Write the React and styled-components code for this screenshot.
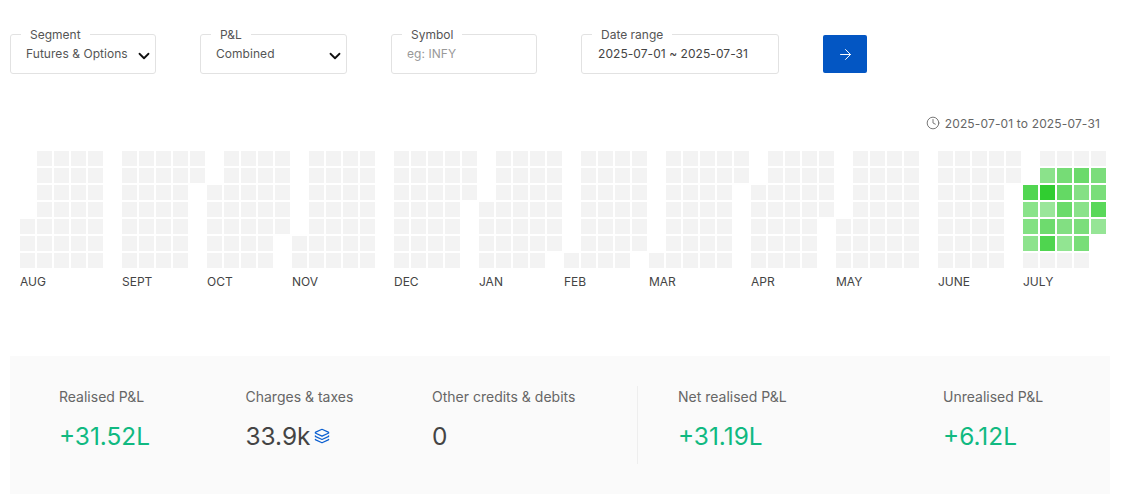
import styled, { createGlobalStyle } from "styled-components";
import { ArrowRight, ChevronDown, Clock, Layers } from "lucide-react";

const GlobalStyle = createGlobalStyle`
  body {
    margin: 0;
    background: #fff;
    font-family: Inter, "Liberation Sans", sans-serif;
    color: #444;
  }
`;

// each column is [first row, last row], null for a blank week
const MONTHS = [
  { label: "AUG", cols: [[4, 6], [0, 6], [0, 6], [0, 6], [0, 6], null] },
  { label: "SEPT", cols: [[0, 6], [0, 6], [0, 6], [0, 6], [0, 1]] },
  { label: "OCT", cols: [[2, 6], [0, 6], [0, 6], [0, 6], [0, 4]] },
  { label: "NOV", cols: [[5, 6], [0, 6], [0, 6], [0, 6], [0, 6], null] },
  { label: "DEC", cols: [[0, 6], [0, 6], [0, 6], [0, 6], [0, 2]] },
  { label: "JAN", cols: [[3, 6], [0, 6], [0, 6], [0, 6], [0, 5]] },
  { label: "FEB", cols: [[6, 6], [0, 6], [0, 6], [0, 6], [0, 5]] },
  { label: "MAR", cols: [[6, 6], [0, 6], [0, 6], [0, 6], [0, 6], [0, 1]] },
  { label: "APR", cols: [[2, 6], [0, 6], [0, 6], [0, 6], [0, 3]] },
  { label: "MAY", cols: [[4, 6], [0, 6], [0, 6], [0, 6], [0, 6], null] },
  { label: "JUNE", cols: [[0, 6], [0, 6], [0, 6], [0, 6], [0, 1]] },
  { label: "JULY", cols: [[2, 6], [0, 6], [0, 6], [0, 6], [0, 4]] },
];

// July's traded days, keyed by "col-row"
const JULY_COLOURS = {
  "1-1": "#8be28b", "2-1": "#76dc76", "3-1": "#6bda6b", "4-1": "#7bdd7b",
  "0-2": "#52d652", "1-2": "#30cd30", "2-2": "#64d964", "3-2": "#85e085", "4-2": "#7ade7a",
  "0-3": "#8ae38a", "1-3": "#9ae69a", "2-3": "#6adb6a", "3-3": "#8ae28a", "4-3": "#59d859",
  "0-4": "#83e183", "1-4": "#6edb6e", "2-4": "#82df82", "3-4": "#7bde7b", "4-4": "#96e596",
  "0-5": "#8de38d", "1-5": "#4fd54f", "2-5": "#92e592", "3-5": "#78de78",
};

const STATS_LEFT = [
  { label: "Realised P&L", value: "+31.52L", positive: true },
  { label: "Charges & taxes", value: "33.9k", breakdown: true },
  { label: "Other credits & debits", value: "0" },
];

const STATS_RIGHT = [
  { label: "Net realised P&L", value: "+31.19L", positive: true },
  { label: "Unrealised P&L", value: "+6.12L", positive: true },
];

function Stat({ label, value, positive, breakdown }) {
  return (
    <StatItem>
      <StatLabel>{label}</StatLabel>
      <StatValue $positive={positive}>
        {value}
        {breakdown && <Layers size={16} color="#0b5fd0" strokeWidth={1.9} />}
      </StatValue>
    </StatItem>
  );
}

function Month({ label, cols }) {
  return (
    <MonthBlock>
      <MonthGrid>
        {cols.map((col, c) => (
          <Week key={c}>
            {col &&
              Array.from({ length: 7 }, (_, r) => (
                <Day
                  key={r}
                  $empty={r < col[0] || r > col[1]}
                  $colour={label === "JULY" ? JULY_COLOURS[`${c}-${r}`] : undefined}
                />
              ))}
          </Week>
        ))}
      </MonthGrid>
      <MonthLabel>{label}</MonthLabel>
    </MonthBlock>
  );
}

export default function App() {
  return (
    <Page>
      <GlobalStyle />
      <Filters>
        <Field $width={146}>
          <Legend>Segment</Legend>
          <Select defaultValue="fo">
            <option value="fo">Futures &amp; Options</option>
          </Select>
          <Chevron size={18} strokeWidth={2.4} />
        </Field>
        <Field $width={147}>
          <Legend>P&amp;L</Legend>
          <Select defaultValue="combined">
            <option value="combined">Combined</option>
          </Select>
          <Chevron size={18} strokeWidth={2.4} />
        </Field>
        <Field $width={146}>
          <Legend>Symbol</Legend>
          <TextInput placeholder="eg: INFY" />
        </Field>
        <Field $width={198}>
          <Legend>Date range</Legend>
          <TextInput $inset={16} readOnly value="2025-07-01 ~ 2025-07-31" />
        </Field>
        <SubmitButton type="button" aria-label="Submit">
          <ArrowRight size={17} strokeWidth={1.4} />
        </SubmitButton>
      </Filters>

      <RangeNote>
        <Clock size={14} strokeWidth={1.5} />
        2025-07-01 to 2025-07-31
      </RangeNote>

      <Heatmap>
        {MONTHS.map((m) => (
          <Month key={m.label} label={m.label} cols={m.cols} />
        ))}
      </Heatmap>

      <StatsPanel>
        <StatsGroup>
          {STATS_LEFT.map((s) => (
            <Stat key={s.label} {...s} />
          ))}
        </StatsGroup>
        <StatsDivider />
        <StatsGroupRight>
          {STATS_RIGHT.map((s) => (
            <Stat key={s.label} {...s} />
          ))}
        </StatsGroupRight>
      </StatsPanel>
    </Page>
  );
}

const Page = styled.div`
  width: 1121px;
  height: 503px;
  overflow: hidden;
  box-sizing: border-box;
  padding: 27px 11px 0 10px;
`;

const Filters = styled.div`
  display: flex;
  align-items: flex-start;
  gap: 44px;
`;

const Field = styled.fieldset`
  position: relative;
  box-sizing: border-box;
  width: ${(p) => p.$width}px;
  height: 47px;
  margin: 0;
  padding: 0;
  min-width: 0;
  border: 1px solid #e2e2e2;
  border-radius: 3px;
`;

const Legend = styled.legend`
  margin-left: 10px;
  padding: 0 9px;
  font-size: 12px;
  line-height: 15px;
  color: #555;
`;

const Select = styled.select`
  display: block;
  width: 100%;
  height: 22px;
  margin: 0;
  padding: 0 20px 0 15px;
  appearance: none;
  border: 0;
  outline: 0;
  background: transparent;
  font: 12px Inter, "Liberation Sans", sans-serif;
  letter-spacing: 0.05px;
  color: #555;
`;

const Chevron = styled(ChevronDown)`
  position: absolute;
  right: 2px;
  top: 5px;
  color: #111;
  pointer-events: none;
`;

const TextInput = styled.input`
  display: block;
  box-sizing: border-box;
  width: 100%;
  height: 22px;
  margin: 0;
  padding: 0 ${(p) => p.$inset || 15}px;
  border: 0;
  outline: 0;
  background: transparent;
  font: 12px Inter, "Liberation Sans", sans-serif;
  letter-spacing: 0.06px;
  color: #444;

  &::placeholder {
    color: #999;
    opacity: 1;
  }
`;

const SubmitButton = styled.button`
  display: flex;
  align-items: center;
  justify-content: center;
  width: 44px;
  height: 38px;
  margin-top: 8px;
  padding: 0;
  border: 0;
  border-radius: 2px;
  background: #0356c3;
  color: #fff;
`;

const RangeNote = styled.div`
  display: flex;
  align-items: center;
  justify-content: flex-end;
  gap: 5px;
  height: 16px;
  margin-top: 41px;
  padding-right: 10px;
  font-size: 12px;
  letter-spacing: 0.15px;
  color: #666;
`;

const Heatmap = styled.div`
  display: flex;
  margin-top: 20px;
  padding-left: 10px;
`;

const MonthBlock = styled.div`
  display: flex;
  flex-direction: column;
`;

const MonthGrid = styled.div`
  display: flex;
`;

const Week = styled.div`
  display: flex;
  flex-direction: column;
  gap: 2px;
  width: 17px;
`;

const Day = styled.div`
  width: 15px;
  height: 15px;
  background: ${(p) => (p.$empty ? "transparent" : p.$colour || "#f3f3f3")};
`;

const MonthLabel = styled.div`
  margin-top: 6px;
  font-size: 12px;
  line-height: 15px;
  color: #444;
`;

const StatsPanel = styled.div`
  display: flex;
  align-items: center;
  box-sizing: border-box;
  width: 1100px;
  height: 138px;
  margin-top: 67px;
  padding-left: 49px;
  background: #fafafa;
`;

const StatsGroup = styled.div`
  display: grid;
  flex: none;
  grid-template-columns: repeat(3, 186.5px);
  width: 578px;
  margin-bottom: 10px;
`;

const StatsDivider = styled.div`
  flex: none;
  width: 1px;
  height: 78px;
  background: #eee;
`;

const StatsGroupRight = styled.div`
  display: grid;
  flex: none;
  grid-template-columns: 265px auto;
  margin-bottom: 10px;
  padding-left: 40px;
`;

const StatItem = styled.div`
  display: flex;
  flex-direction: column;
  gap: 16px;
`;

const StatLabel = styled.div`
  font-size: 14px;
  line-height: 16px;
  color: #666;
`;

const StatValue = styled.div`
  display: flex;
  align-items: center;
  gap: 4px;
  font-size: 24.4px;
  line-height: 30px;
  color: ${(p) => (p.$positive ? "#10b981" : "#444")};
`;
